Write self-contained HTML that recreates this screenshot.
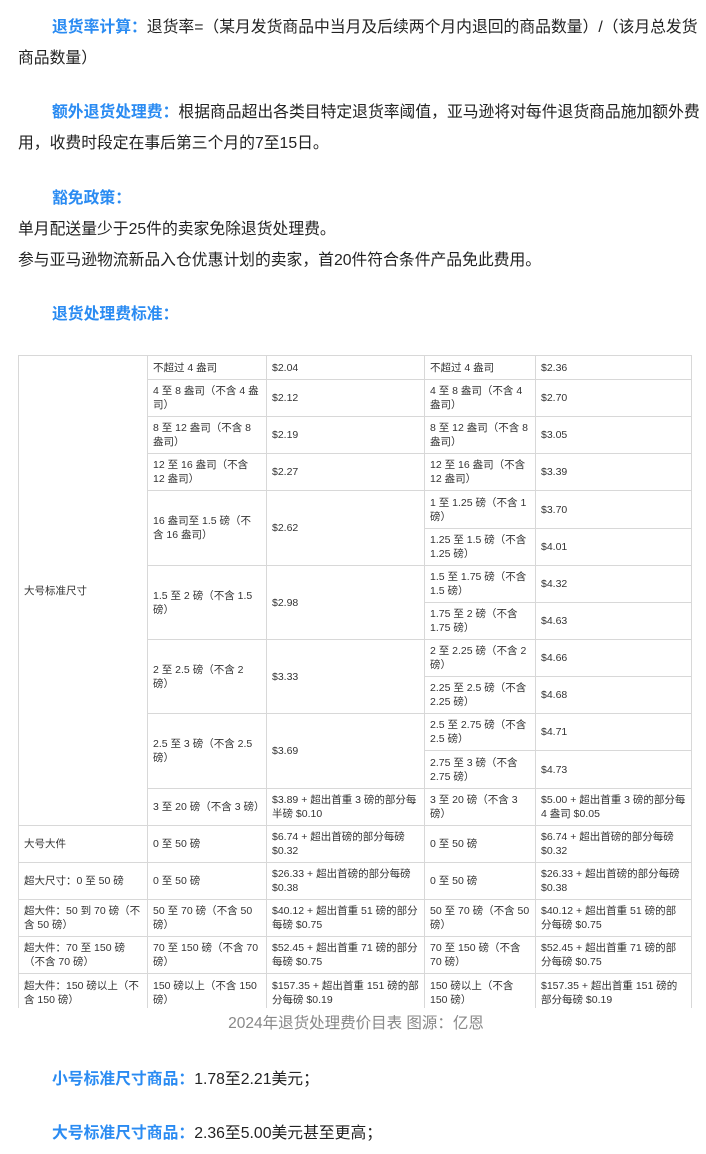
<!DOCTYPE html>
<html><head><meta charset="utf-8"><style>
body{margin:0;width:706px;height:1154px;background:#fff;position:relative;overflow:hidden;font-family:"Liberation Sans","Noto Sans CJK SC",sans-serif;color:#222}
.l{position:absolute;left:18px;font-size:15.8px;white-space:nowrap;line-height:20px}
.b{color:#2a8bf2;font-weight:bold}
table{position:absolute;left:18px;top:355px;border-collapse:collapse;table-layout:fixed;font-size:10.5px;color:#333;line-height:14px}
td{border:1px solid #d8d8d8;padding:0 5px;vertical-align:middle}
.wrap{position:absolute;left:0;top:0;width:706px;height:1008px;overflow:hidden}
</style></head><body>
<div class="l" style="top:18px;left:52px"><span class="b">退货率计算：</span>退货率=（某月发货商品中当月及后续两个月内退回的商品数量）/（该月总发货</div>
<div class="l" style="top:49px">商品数量）</div>
<div class="l" style="top:103px;left:52px"><span class="b">额外退货处理费：</span>根据商品超出各类目特定退货率阈值，亚马逊将对每件退货商品施加额外费</div>
<div class="l" style="top:134px">用，收费时段定在事后第三个月的7至15日。</div>
<div class="l" style="top:189px;left:52px"><span class="b">豁免政策：</span></div>
<div class="l" style="top:220px">单月配送量少于25件的卖家免除退货处理费。</div>
<div class="l" style="top:251px">参与亚马逊物流新品入仓优惠计划的卖家，首20件符合条件产品免此费用。</div>
<div class="l" style="top:305px;left:52px"><span class="b">退货处理费标准：</span></div>
<div class="wrap"><table>
<colgroup><col style="width:129px"><col style="width:119px"><col style="width:158px"><col style="width:111px"><col style="width:156px"></colgroup>
<tr style="height:24px"><td rowspan="18">大号标准尺寸</td><td>不超过 4 盎司</td><td>$2.04</td><td>不超过 4 盎司</td><td>$2.36</td></tr>
<tr style="height:37px"><td>4 至 8 盎司（不含 4 盎司）</td><td>$2.12</td><td>4 至 8 盎司（不含 4 盎司）</td><td>$2.70</td></tr>
<tr style="height:37px"><td>8 至 12 盎司（不含 8 盎司）</td><td>$2.19</td><td>8 至 12 盎司（不含 8 盎司）</td><td>$3.05</td></tr>
<tr style="height:37px"><td>12 至 16 盎司（不含 12 盎司）</td><td>$2.27</td><td>12 至 16 盎司（不含 12 盎司）</td><td>$3.39</td></tr>
<tr style="height:38px"><td rowspan="2">16 盎司至 1.5 磅（不含 16 盎司）</td><td rowspan="2">$2.62</td><td>1 至 1.25 磅（不含 1 磅）</td><td>$3.70</td></tr>
<tr style="height:37px"><td>1.25 至 1.5 磅（不含 1.25 磅）</td><td>$4.01</td></tr>
<tr style="height:37px"><td rowspan="2">1.5 至 2 磅（不含 1.5 磅）</td><td rowspan="2">$2.98</td><td>1.5 至 1.75 磅（不含 1.5 磅）</td><td>$4.32</td></tr>
<tr style="height:37px"><td>1.75 至 2 磅（不含 1.75 磅）</td><td>$4.63</td></tr>
<tr style="height:37px"><td rowspan="2">2 至 2.5 磅（不含 2 磅）</td><td rowspan="2">$3.33</td><td>2 至 2.25 磅（不含 2 磅）</td><td>$4.66</td></tr>
<tr style="height:37px"><td>2.25 至 2.5 磅（不含 2.25 磅）</td><td>$4.68</td></tr>
<tr style="height:37px"><td rowspan="2">2.5 至 3 磅（不含 2.5 磅）</td><td rowspan="2">$3.69</td><td>2.5 至 2.75 磅（不含 2.5 磅）</td><td>$4.71</td></tr>
<tr style="height:38px"><td>2.75 至 3 磅（不含 2.75 磅）</td><td>$4.73</td></tr>
<tr style="height:37px"><td>3 至 20 磅（不含 3 磅）</td><td>$3.89 + 超出首重 3 磅的部分每半磅 $0.10</td><td>3 至 20 磅（不含 3 磅）</td><td>$5.00 + 超出首重 3 磅的部分每 4 盎司 $0.05</td></tr>
</table>
<table style="top:825px">
<colgroup><col style="width:129px"><col style="width:119px"><col style="width:158px"><col style="width:111px"><col style="width:156px"></colgroup>
<tr style="height:37px"><td>大号大件</td><td>0 至 50 磅</td><td>$6.74 + 超出首磅的部分每磅 $0.32</td><td>0 至 50 磅</td><td>$6.74 + 超出首磅的部分每磅 $0.32</td></tr>
<tr style="height:37px"><td>超大尺寸：0 至 50 磅</td><td>0 至 50 磅</td><td>$26.33 + 超出首磅的部分每磅 $0.38</td><td>0 至 50 磅</td><td>$26.33 + 超出首磅的部分每磅 $0.38</td></tr>
<tr style="height:37px"><td>超大件：50 到 70 磅（不含 50 磅）</td><td>50 至 70 磅（不含 50 磅）</td><td>$40.12 + 超出首重 51 磅的部分每磅 $0.75</td><td>50 至 70 磅（不含 50 磅）</td><td>$40.12 + 超出首重 51 磅的部分每磅 $0.75</td></tr>
<tr style="height:37px"><td>超大件：70 至 150 磅（不含 70 磅）</td><td>70 至 150 磅（不含 70 磅）</td><td>$52.45 + 超出首重 71 磅的部分每磅 $0.75</td><td>70 至 150 磅（不含 70 磅）</td><td>$52.45 + 超出首重 71 磅的部分每磅 $0.75</td></tr>
<tr style="height:38px"><td>超大件：150 磅以上（不含 150 磅）</td><td>150 磅以上（不含 150 磅）</td><td>$157.35 + 超出首重 151 磅的部分每磅 $0.19</td><td>150 磅以上（不含 150 磅）</td><td>$157.35 + 超出首重 151 磅的部分每磅 $0.19</td></tr>
</table></div>
<div style="position:absolute;top:1014px;left:0;width:712px;text-align:center;font-size:15.5px;color:#888;line-height:20px">2024年退货处理费价目表 图源：亿恩</div>
<div class="l" style="top:1070px;left:52px"><span class="b">小号标准尺寸商品：</span>1.78至2.21美元；</div>
<div class="l" style="top:1124px;left:52px"><span class="b">大号标准尺寸商品：</span>2.36至5.00美元甚至更高；</div>
</body></html>
